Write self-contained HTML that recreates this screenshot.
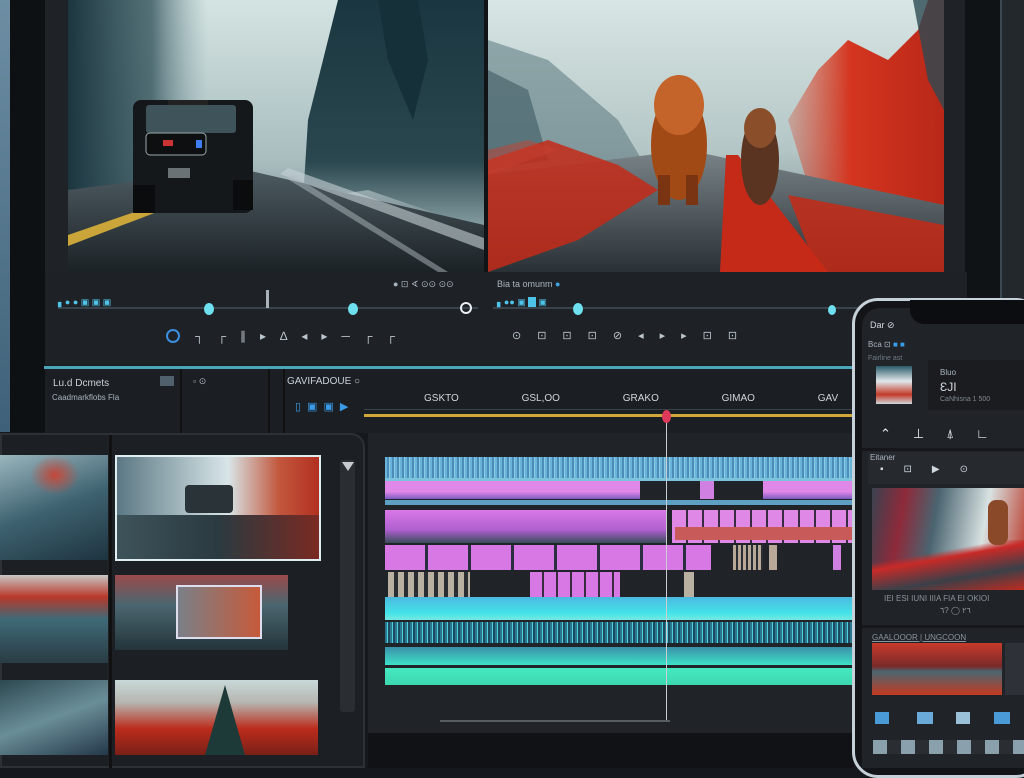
<!DOCTYPE html>
<html><head><meta charset="utf-8"><style>
*{margin:0;padding:0;box-sizing:border-box}
body{width:1024px;height:768px;background:#15181c;position:relative;overflow:hidden;font-family:"Liberation Sans",sans-serif;color:#b8c2cc}
.a{position:absolute}
.t{font-size:9px;color:#aab4bf;white-space:nowrap}
</style></head><body>
<!-- left strip -->
<div class="a" style="left:0;top:0;width:10px;height:432px;background:linear-gradient(#6d8ea3,#3e6078)"></div>
<div class="a" style="left:10px;top:0;width:35px;height:432px;background:#0e1114"></div>
<!-- main monitor panel -->
<div class="a" style="left:45px;top:0;width:922px;height:365px;background:#1f2226"></div>
<div class="a" style="left:965px;top:0;width:35px;height:300px;background:#101316"></div>
<div class="a" style="left:1000px;top:0;width:24px;height:300px;background:#23282d;border-left:2px solid #3a4a55"></div>
<!-- video 1 -->
<svg class="a" style="left:68px;top:0" width="416" height="272" viewBox="0 0 416 272">
<defs>
<linearGradient id="fog" x1="0" y1="0" x2="0" y2="1"><stop offset="0" stop-color="#d4e4e2"/><stop offset="0.6" stop-color="#a8bcbe"/><stop offset="1" stop-color="#5a6d73"/></linearGradient>
<linearGradient id="road" x1="0" y1="0" x2="0" y2="1"><stop offset="0" stop-color="#4e5c62"/><stop offset="1" stop-color="#1b2226"/></linearGradient>
<linearGradient id="lt" x1="0" y1="0" x2="1" y2="0"><stop offset="0" stop-color="#1c3640"/><stop offset="0.6" stop-color="#35555e" stop-opacity="0.8"/><stop offset="1" stop-color="#7a9aa0" stop-opacity="0"/></linearGradient>
<linearGradient id="rt" x1="0" y1="0" x2="0" y2="1"><stop offset="0" stop-color="#1a3640"/><stop offset="0.7" stop-color="#2a464e"/><stop offset="1" stop-color="#8aa2a6"/></linearGradient>
</defs>
<rect width="416" height="272" fill="url(#fog)"/>
<rect x="0" y="0" width="140" height="200" fill="url(#lt)"/>
<polygon points="235,200 240,120 255,60 270,0 416,0 416,230 300,190" fill="url(#rt)"/>
<polygon points="310,0 350,0 360,60 345,120 320,60" fill="#163039"/>
<polygon points="0,190 170,168 416,225 416,272 0,272" fill="url(#road)"/>
<polygon points="220,168 416,238 416,250 212,174" fill="#c6d2d6" opacity="0.6"/>
<polygon points="225,175 380,272 370,272 218,178" fill="#b0bcc0" opacity="0.5"/>
<polygon points="0,235 130,190 136,194 0,246" fill="#c9a53a"/>
<rect x="65" y="100" width="120" height="113" rx="8" fill="#15181b"/>
<rect x="78" y="105" width="90" height="28" rx="3" fill="#3e535a"/>
<rect x="100" y="100" width="40" height="5" fill="#222"/>
<rect x="78" y="133" width="60" height="22" rx="4" fill="#0d0f11" stroke="#9aa" stroke-width="1"/>
<rect x="95" y="140" width="10" height="6" fill="#c33"/>
<rect x="128" y="140" width="6" height="8" fill="#3d7ef0"/>
<rect x="100" y="168" width="22" height="10" fill="#6a7276"/>
<rect x="65" y="185" width="22" height="28" fill="#0a0c0d"/><rect x="165" y="180" width="20" height="30" fill="#0a0c0d"/>
</svg>
<div class="a" style="left:484px;top:0;width:4px;height:365px;background:#111417"></div>
<!-- video 2 -->
<svg class="a" style="left:488px;top:0" width="456" height="272" viewBox="0 0 456 272">
<defs>
<linearGradient id="fog2" x1="0" y1="0" x2="0" y2="1"><stop offset="0" stop-color="#d8e6e4"/><stop offset="0.55" stop-color="#b4c6c6"/><stop offset="1" stop-color="#6c7c80"/></linearGradient>
<linearGradient id="road2" x1="0" y1="0" x2="0" y2="1"><stop offset="0" stop-color="#7a8488"/><stop offset="1" stop-color="#2a3136"/></linearGradient>
<linearGradient id="rtr" x1="0" y1="0" x2="1" y2="0"><stop offset="0" stop-color="#d84a30" stop-opacity="0.3"/><stop offset="0.4" stop-color="#d4351f"/><stop offset="1" stop-color="#b82818"/></linearGradient>
</defs>
<rect width="456" height="272" fill="url(#fog2)"/>
<polygon points="0,40 60,60 130,120 160,170 0,180" fill="#5a767e" opacity="0.55"/>
<polygon points="0,70 40,90 60,160 0,170" fill="#3e5a62" opacity="0.6"/>
<polygon points="300,120 330,70 360,40 400,60 430,30 440,0 456,0 456,205 320,185" fill="url(#rtr)"/>
<polygon points="425,0 456,0 456,110 440,80" fill="#2c4a52" opacity="0.8"/>
<polygon points="0,175 200,150 456,205 456,272 0,272" fill="url(#road2)"/>
<polygon points="0,160 60,140 130,165 170,190 90,240 0,272" fill="#c42a18" opacity="0.85"/>
<polygon points="0,150 40,140 70,150 0,175" fill="#c84030" opacity="0.5"/>
<polygon points="238,155 250,155 340,272 232,272" fill="#c52a18"/>
<polygon points="300,195 456,225 456,272 330,272" fill="#c52a18" opacity="0.85"/>
<ellipse cx="191" cy="145" rx="28" ry="55" fill="#a24a16"/>
<ellipse cx="191" cy="105" rx="25" ry="30" fill="#c4642a"/>
<rect x="170" y="175" width="12" height="30" fill="#7a3412"/><rect x="198" y="175" width="12" height="30" fill="#7a3412"/>
<ellipse cx="272" cy="160" rx="19" ry="45" fill="#5a3420"/>
<ellipse cx="272" cy="128" rx="16" ry="20" fill="#8a4e2a"/>
</svg>
<!-- monitor controls -->
<div class="a" style="left:45px;top:272px;width:922px;height:93px;background:#1e2125"></div>
<div class="a t" style="left:393px;top:279px">● ⊡ ∢ ⊙⊙ ⊙⊙</div>
<div class="a t" style="left:497px;top:279px">Bia ta omunm <span style="color:#3fa4e0">●</span></div>
<div class="a" style="left:58px;top:307px;width:420px;height:2px;background:#39434c"></div>
<div class="a" style="left:58px;top:297px;width:80px;height:10px;font-size:9px;color:#4fc2e8">▖● ● ▣ ▣ ▣</div>
<div class="a" style="left:204px;top:303px;width:10px;height:12px;border-radius:50%;background:#6fe0ef"></div>
<div class="a" style="left:348px;top:303px;width:10px;height:12px;border-radius:50%;background:#6fe0ef"></div>
<div class="a" style="left:460px;top:302px;width:12px;height:12px;border-radius:50%;border:2px solid #e8eef2"></div>
<div class="a" style="left:266px;top:290px;width:3px;height:18px;background:#a9b2b8"></div>
<div class="a" style="left:166px;top:329px;width:14px;height:14px;border-radius:50%;border:2px solid #3a8fe0"></div>
<div class="a t" style="left:195px;top:329px;font-size:12px;letter-spacing:14px;color:#bcc6ce">┐┌∥▸∆◂▸─┌┌</div>
<div class="a" style="left:493px;top:307px;width:440px;height:2px;background:#39434c"></div>
<div class="a" style="left:497px;top:297px;font-size:9px;color:#4fc2e8">▖●● ▣ <span style="background:#4fc2e8">&nbsp;&nbsp;&nbsp;</span> ▣</div>
<div class="a" style="left:573px;top:303px;width:10px;height:12px;border-radius:50%;background:#6fe0ef"></div>
<div class="a" style="left:828px;top:305px;width:8px;height:10px;border-radius:50%;background:#6fe0ef"></div>
<div class="a t" style="left:512px;top:329px;font-size:11px;letter-spacing:16px;color:#bcc6ce">⊙⊡⊡⊡⊘◂▸▸⊡⊡</div>
<div class="a" style="left:44px;top:366px;width:810px;height:3px;background:#4aa6b8"></div>
<!-- timeline header -->
<div class="a" style="left:45px;top:369px;width:810px;height:64px;background:#1b1e22"></div>
<div class="a" style="left:180px;top:369px;width:2px;height:64px;background:#111"></div>
<div class="a" style="left:268px;top:369px;width:2px;height:64px;background:#111"></div>
<div class="a" style="left:283px;top:369px;width:2px;height:64px;background:#111"></div>
<div class="a t" style="left:53px;top:378px;font-size:10px;color:#c8d0d8">Lu.d Dcmets</div>
<div class="a" style="left:160px;top:376px;width:14px;height:10px;background:#50606c"></div>
<div class="a t" style="left:52px;top:393px;font-size:8px">Caadmarkflobs Fla</div>
<div class="a t" style="left:193px;top:376px">▫ ⊙</div>
<div class="a t" style="left:287px;top:376px;font-size:10px;color:#c8d0d8">GAVIFADOUE ○</div>
<div class="a" style="left:295px;top:400px;font-size:11px;color:#3a9ce8;letter-spacing:6px">▯▣▣▶</div>
<div class="a t" style="left:424px;top:393px;font-size:10px;color:#cfd7dd;word-spacing:60px">GSKTO GSL,OO GRAKO GIMAO GAV</div>
<div class="a" style="left:364px;top:409px;width:490px;height:1px;background:#3a4248"></div>
<div class="a" style="left:364px;top:414px;width:490px;height:3px;background:#d0a83a"></div>
<!-- bin panel -->
<div class="a" style="left:0;top:433px;width:365px;height:335px;background:#1c1f23;border-radius:0 14px 0 0;border:2px solid #2c3136"></div>
<div class="a" style="left:109px;top:435px;width:3px;height:333px;background:#111"></div>
<div class="a" style="left:0;top:455px;width:108px;height:105px;background:linear-gradient(160deg,#9ab6be,#3e6270 50%,#1e3440);"></div>
<div class="a" style="left:30px;top:455px;width:50px;height:40px;background:radial-gradient(#c4483a,transparent 70%)"></div>
<div class="a" style="left:115px;top:455px;width:206px;height:106px;border:2px solid #e0eef2;background:linear-gradient(90deg,#5b7884,#d8e6e8 55%,#c2583e 80%,#b23020)"></div>
<div class="a" style="left:185px;top:485px;width:48px;height:28px;background:#2a3338;border-radius:4px"></div>
<div class="a" style="left:117px;top:515px;width:202px;height:44px;background:linear-gradient(90deg,#3e535a,#2a3a40 50%,#7a2a22)"></div>
<div class="a" style="left:0;top:575px;width:108px;height:88px;background:linear-gradient(180deg,#c8c6c4,#b8382a 25%,#3e6a78 50%,#2a3c44)"></div>
<div class="a" style="left:115px;top:575px;width:173px;height:75px;background:linear-gradient(180deg,#9a4a4a,#4a6670 40%,#24343a)"></div>
<div class="a" style="left:176px;top:585px;width:86px;height:54px;border:2px solid #dde;background:linear-gradient(90deg,#7a8088,#c65a3a)"></div>
<div class="a" style="left:0;top:680px;width:108px;height:75px;background:linear-gradient(160deg,#2c4850,#6a8e98 50%,#24384a)"></div>
<div class="a" style="left:115px;top:680px;width:203px;height:75px;background:linear-gradient(180deg,#c8d8d8,#b6b6b0 30%,#bb2c1c 65%,#7a2018)"></div>
<div class="a" style="left:205px;top:685px;width:40px;height:70px;background:#1e3a38;clip-path:polygon(50% 0,100% 100%,0 100%)"></div>
<div class="a" style="left:340px;top:460px;width:15px;height:252px;background:#2a2e33;border-radius:3px"></div>
<div class="a" style="left:342px;top:462px;width:0;height:0;border-left:6px solid transparent;border-right:6px solid transparent;border-top:9px solid #c8ccd0"></div>
<!-- timeline -->
<div class="a" style="left:368px;top:433px;width:486px;height:300px;background:#202327"></div>
<div class="a" style="left:368px;top:733px;width:486px;height:35px;background:#101215"></div>
<div class="a" style="left:385px;top:457px;width:467px;height:21px;background:repeating-linear-gradient(90deg,#6ab4dc 0 2px,#4c8cb8 2px 4px,#8acbe4 4px 5px)"></div>
<div class="a" style="left:385px;top:478px;width:467px;height:3px;background:#7cc4dc"></div>
<div class="a" style="left:385px;top:481px;width:255px;height:18px;background:linear-gradient(#e088e8 60%,#7a5ac0)"></div>
<div class="a" style="left:700px;top:481px;width:14px;height:18px;background:#d080e0"></div>
<div class="a" style="left:763px;top:481px;width:89px;height:18px;background:linear-gradient(#e088e8 60%,#7a5ac0)"></div>
<div class="a" style="left:385px;top:500px;width:467px;height:5px;background:#5ea0c4"></div>
<div class="a" style="left:385px;top:510px;width:281px;height:33px;background:linear-gradient(#d978e6,#b060d0 60%,#3a4c5a)"></div>
<div class="a" style="left:672px;top:510px;width:180px;height:33px;background:repeating-linear-gradient(90deg,#e088e6 0 14px,#3a2c40 14px 16px)"></div>
<div class="a" style="left:675px;top:527px;width:177px;height:13px;background:#c85a5a"></div>
<div class="a" style="left:385px;top:545px;width:326px;height:25px;background:repeating-linear-gradient(90deg,#d878e4 0 40px,#2a2e40 40px 43px)"></div>
<div class="a" style="left:733px;top:545px;width:30px;height:25px;background:repeating-linear-gradient(90deg,#b8a898 0 3px,#2a2e33 3px 5px)"></div>
<div class="a" style="left:769px;top:545px;width:8px;height:25px;background:#b8a898"></div>
<div class="a" style="left:833px;top:545px;width:8px;height:25px;background:#d080e0"></div>
<div class="a" style="left:388px;top:572px;width:82px;height:25px;background:repeating-linear-gradient(90deg,#b8b0a0 0 6px,#2a2e33 6px 10px)"></div>
<div class="a" style="left:530px;top:572px;width:90px;height:25px;background:repeating-linear-gradient(90deg,#d878e4 0 12px,#3a2c40 12px 14px)"></div>
<div class="a" style="left:684px;top:572px;width:10px;height:25px;background:#b8b0a0"></div>
<div class="a" style="left:385px;top:597px;width:467px;height:23px;background:linear-gradient(#4cb8e0,#44e4e8 70%,#78e8e0)"></div>
<div class="a" style="left:385px;top:622px;width:467px;height:21px;background:repeating-linear-gradient(90deg,#2a7890 0 2px,#50d0dc 2px 3px,#1c4a60 3px 5px)"></div>
<div class="a" style="left:385px;top:647px;width:467px;height:18px;background:linear-gradient(#3a90a8,#3ee0c8)"></div>
<div class="a" style="left:385px;top:668px;width:467px;height:17px;background:linear-gradient(#46e8c0,#3cd8b0)"></div>
<div class="a" style="left:440px;top:720px;width:230px;height:2px;background:#555c62"></div>
<div class="a" style="left:666px;top:418px;width:1px;height:302px;background:#c8ced2"></div>
<div class="a" style="left:662px;top:410px;width:9px;height:13px;border-radius:50%;background:#e03a5a"></div>
<!-- phone -->
<div class="a" style="left:852px;top:298px;width:190px;height:480px;border-radius:26px;border:3px solid #c6d0d8;background:#121417"></div>
<div class="a" style="left:862px;top:308px;width:170px;height:460px;border-radius:18px 0 0 0;background:#202327"></div>
<div class="a" style="left:910px;top:300px;width:114px;height:24px;background:#0c0d10;border-radius:0 0 0 14px"></div>
<div class="a t" style="left:870px;top:320px;font-size:9px;color:#d0d8e0">Dar ⊘</div>
<div class="a t" style="left:868px;top:340px;font-size:8px">Bca ⊡ <span style="color:#3a9ce8">■</span> <span style="color:#3a9ce8">■</span></div>
<div class="a t" style="left:868px;top:355px;font-size:7px;color:#707a84">Fairline ast</div>
<div class="a" style="left:876px;top:366px;width:36px;height:38px;background:linear-gradient(#2a5a6a,#e0e8ea 40%,#c23a2a 75%,#d0d8dc)"></div>
<div class="a" style="left:928px;top:360px;width:96px;height:50px;background:#1a1c20"></div>
<div class="a t" style="left:940px;top:368px;font-size:8px">Bluo</div>
<div class="a t" style="left:940px;top:380px;font-size:12px;color:#d0d8e0">ƐJI</div>
<div class="a t" style="left:940px;top:396px;font-size:7px;color:#808890">CaNhisna 1 500</div>
<div class="a t" style="left:880px;top:426px;font-size:13px;color:#e8eef2;letter-spacing:22px">⌃⊥⍋∟</div>
<div class="a" style="left:862px;top:448px;width:162px;height:3px;background:#15171a"></div>
<div class="a" style="left:868px;top:452px;width:156px;height:32px;background:#26292e"></div>
<div class="a t" style="left:870px;top:453px;font-size:8px">Eitaner</div>
<div class="a t" style="left:880px;top:464px;font-size:10px;color:#d0d8e0;letter-spacing:20px">▪⊡▶⊙</div>
<div class="a" style="left:872px;top:488px;width:152px;height:102px;background:linear-gradient(100deg,#3a4250,#8e2a3a 20%,#4a6470 40%,#d8e2e2 70%,#b83020)"></div>
<div class="a" style="left:872px;top:540px;width:152px;height:50px;background:linear-gradient(170deg,transparent 30%,#c82a28 40%,#3a4048 70%,#c02a20)"></div>
<div class="a" style="left:988px;top:500px;width:20px;height:45px;background:#8a4a2a;border-radius:8px"></div>
<div class="a t" style="left:884px;top:594px;font-size:8px;color:#8a949c">IEI ESI IUNI IIIA FIA EI OKIOI</div>
<div class="a t" style="left:940px;top:606px;font-size:8px;color:#8a949c">٢٦ ◯ ?٦</div>
<div class="a" style="left:862px;top:625px;width:162px;height:3px;background:#15171a"></div>
<div class="a t" style="left:872px;top:633px;font-size:8px;color:#8a949c;text-decoration:underline">GAALOOOR | UNGCOON</div>
<div class="a" style="left:872px;top:643px;width:130px;height:52px;background:linear-gradient(#c83a2a,#7a2a2a 45%,#4a6670 55%,#c43a22)"></div>
<div class="a" style="left:1005px;top:643px;width:19px;height:52px;background:#2e3238"></div>
<div class="a" style="left:875px;top:712px;width:14px;height:12px;background:#4a9ad8"></div>
<div class="a" style="left:917px;top:712px;width:16px;height:12px;background:#6aaad8"></div>
<div class="a" style="left:956px;top:712px;width:14px;height:12px;background:#9ac0d8"></div>
<div class="a" style="left:994px;top:712px;width:16px;height:12px;background:#4a9ad8"></div>
<div class="a" style="left:873px;top:740px;width:151px;height:14px;background:repeating-linear-gradient(90deg,#8aa0ac 0 14px,#2a2e33 14px 28px)"></div>
</body></html>
